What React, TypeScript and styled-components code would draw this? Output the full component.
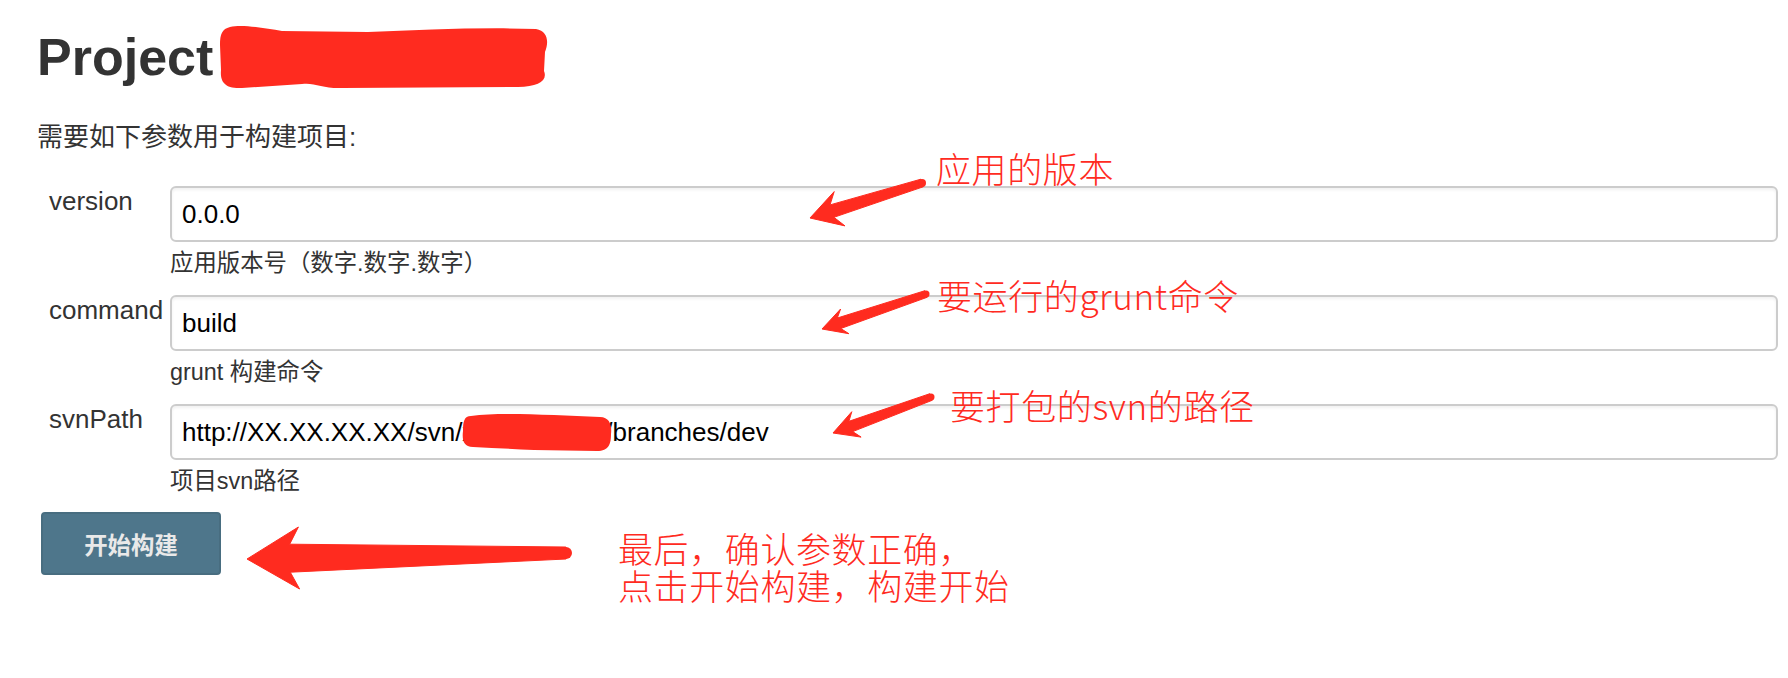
import React from "react";
import styled, { createGlobalStyle } from "styled-components";

const GlobalStyle = createGlobalStyle`
  html, body {
    margin: 0;
    padding: 0;
    background: #ffffff;
  }
  body {
    font-family: "Liberation Sans", "Noto Sans CJK SC", sans-serif;
  }
`;

const Page = styled.div`
  position: relative;
  width: 1788px;
  height: 678px;
  box-sizing: border-box;
  padding: 25px 10px 0 37px;
  color: #333333;
  overflow: hidden;
`;

const Title = styled.h1`
  margin: 0;
  font-family: "Liberation Sans", "Noto Sans CJK SC", sans-serif;
  font-size: 52px;
  line-height: 62px;
  height: 62px;
  font-weight: bold;
  color: #333333;
  white-space: nowrap;
`;

const Scribble = styled.svg`
  display: inline-block;
  width: 330px;
  height: 64px;
  margin-left: 5px;
  vertical-align: -14px;
`;

const Intro = styled.p`
  margin: 35px 0 0;
  font-size: 26px;
  line-height: 30px;
  color: #333333;
`;

const Form = styled.div`
  display: grid;
  grid-template-columns: 133px 1fr;
  row-gap: 18px;
  margin-top: 34px;
`;

const Label = styled.label`
  padding-left: 12px;
  font-size: 26px;
  line-height: 30px;
  color: #333333;
`;

const Field = styled.div`
  position: relative;
  display: flex;
  flex-direction: column;
`;

const TextInput = styled.input`
  box-sizing: border-box;
  width: 100%;
  height: 56px;
  margin: 0;
  padding: 0 10px;
  border: 2px solid #cccccc;
  border-radius: 6px;
  background: #ffffff;
  box-shadow: inset 0 2px 3px rgba(0, 0, 0, 0.06);
  font-family: "Liberation Sans", "Noto Sans CJK SC", sans-serif;
  font-size: 26px;
  color: #000000;
  outline: none;
`;

const Help = styled.div`
  margin-top: 7px;
  font-size: 23.4px;
  line-height: 28px;
  color: #333333;
`;

const Redaction = styled.svg`
  position: absolute;
  left: 292px;
  top: 9px;
  width: 150px;
  height: 39px;
  pointer-events: none;
`;

const BuildButton = styled.button`
  display: block;
  box-sizing: border-box;
  margin: 17px 0 0 4px;
  width: 180px;
  height: 63px;
  padding: 0;
  background: #4e768b;
  border: 2px solid #486d80;
  border-radius: 4px;
  color: #e9e9e9;
  font-family: "Liberation Sans", "Noto Sans CJK SC", sans-serif;
  font-weight: bold;
  font-size: 23.4px;
  cursor: pointer;
`;

const Overlay = styled.svg`
  position: absolute;
  left: 0;
  top: 0;
  width: 1788px;
  height: 678px;
  pointer-events: none;
`;

const Note = styled.div<{ $x: number; $y: number }>`
  position: absolute;
  left: ${(p) => p.$x}px;
  top: ${(p) => p.$y}px;
  color: #ff2b1f;
  font-family: "Noto Sans CJK SC", sans-serif;
  font-weight: 300;
  font-size: 35px;
  line-height: 37px;
  letter-spacing: 0.6px;
  white-space: pre;
  pointer-events: none;
`;

type Pt = [number, number];

interface ArrowSpec {
  tail: Pt;
  tip: Pt;
  headLen: number;
  headHalf: number;
  neckHalf: number;
  tailHalf: number;
  notch: number;
}

const arrows: ArrowSpec[] = [
  { tail: [922, 183], tip: [810, 218], headLen: 31, headHalf: 18, neckHalf: 6.5, tailHalf: 4, notch: 8 },
  { tail: [926, 294], tip: [822, 329], headLen: 24, headHalf: 13, neckHalf: 5.5, tailHalf: 3.5, notch: 6 },
  { tail: [931, 397], tip: [833, 433], headLen: 25, headHalf: 13.5, neckHalf: 5.5, tailHalf: 3.5, notch: 6 },
  { tail: [566, 553], tip: [247, 559], headLen: 52, headHalf: 31, neckHalf: 14, tailHalf: 6, notch: 9 },
];

function arrowPolygon(a: ArrowSpec): string {
  const dx = a.tip[0] - a.tail[0];
  const dy = a.tip[1] - a.tail[1];
  const len = Math.hypot(dx, dy);
  const ux = dx / len;
  const uy = dy / len;
  const nx = -uy;
  const ny = ux;
  const p = (base: Pt, along: number, side: number): Pt => [
    base[0] + ux * along + nx * side,
    base[1] + uy * along + ny * side,
  ];
  const pts: Pt[] = [
    a.tip,
    p(a.tip, -a.headLen, a.headHalf),
    p(a.tip, -(a.headLen - a.notch), a.neckHalf),
    p(a.tail, 0, a.tailHalf),
    p(a.tail, 0, -a.tailHalf),
    p(a.tip, -(a.headLen - a.notch), -a.neckHalf),
    p(a.tip, -a.headLen, -a.headHalf),
  ];
  return pts.map(([x, y]) => `${x.toFixed(1)},${y.toFixed(1)}`).join(" ");
}

const fields = [
  { name: "version", value: "0.0.0", help: "应用版本号（数字.数字.数字）" },
  { name: "command", value: "build", help: "grunt 构建命令" },
  { name: "svnPath", value: "http://XX.XX.XX.XX/svn/xxxxxxxxxxx/branches/dev", help: "项目svn路径", redact: true },
];

const RED = "#ff2b1f";

export default function App() {
  return (
    <>
      <GlobalStyle />
      <Page>
        <Title>
          Project
          <Scribble viewBox="0 0 330 64" aria-hidden="true">
            <path
              fill={RED}
              d="M12 2 C24 -1 46 3 64 6 L150 7 C205 5 262 2 318 4 C330 6 331 17 327 27 L326 46 C330 56 320 62 300 62 L124 63 C106 64 96 57 84 59 L24 63 C6 64 2 56 3 45 L2 20 C2 9 4 4 12 2 Z"
            />
          </Scribble>
        </Title>
        <Intro>需要如下参数用于构建项目:</Intro>
        <Form>
          {fields.map((f) => (
            <React.Fragment key={f.name}>
              <Label htmlFor={f.name}>{f.name}</Label>
              <Field>
                <TextInput id={f.name} defaultValue={f.value} />
                {f.redact && (
                  <Redaction viewBox="0 0 150 39" aria-hidden="true">
                    <path
                      fill={RED}
                      d="M9 3 C30 0 60 1 92 2 L138 4 C148 4 150 13 149 21 C149 31 147 38 135 38 L72 37 C52 36 32 35 11 34 C1 34 0 26 1 18 C1 9 2 3 9 3 Z"
                    />
                  </Redaction>
                )}
                <Help>{f.help}</Help>
              </Field>
            </React.Fragment>
          ))}
        </Form>
        <BuildButton type="button">开始构建</BuildButton>

        <Overlay viewBox="0 0 1788 678" aria-hidden="true">
          {arrows.map((a, i) => (
            <g key={i} fill={RED}>
              <polygon points={arrowPolygon(a)} strokeLinejoin="round" stroke={RED} strokeWidth={1} />
              <circle cx={a.tail[0]} cy={a.tail[1]} r={a.tailHalf} />
            </g>
          ))}
        </Overlay>
        <Note $x={936} $y={149}>应用的版本</Note>
        <Note $x={937} $y={276}>要运行的grunt命令</Note>
        <Note $x={950} $y={386}>要打包的svn的路径</Note>
        <Note $x={618} $y={529}>{"最后，确认参数正确，\n点击开始构建，构建开始"}</Note>
      </Page>
    </>
  );
}
